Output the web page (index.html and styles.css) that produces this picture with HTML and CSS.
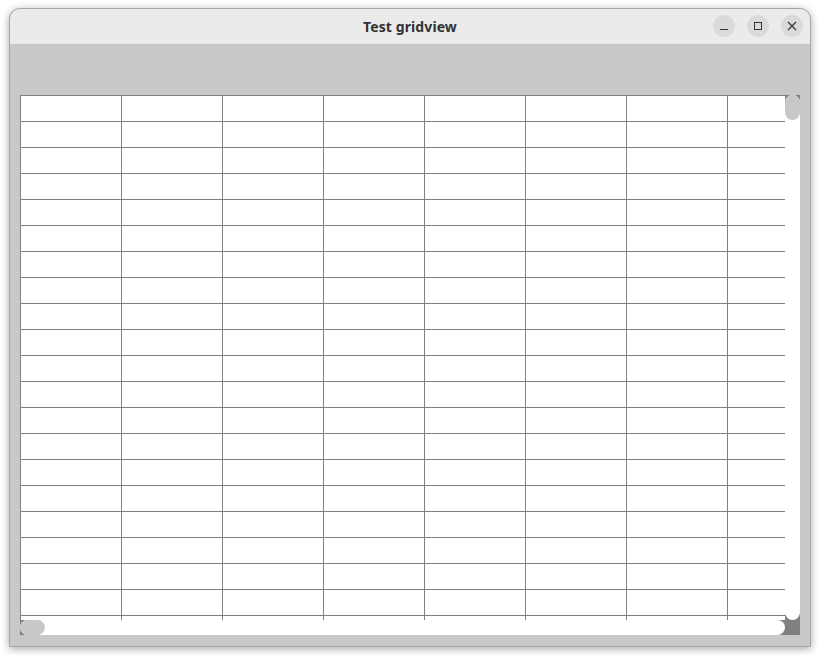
FILE: index.html
```html
<!DOCTYPE html>
<html lang="en">
<head>
<meta charset="utf-8">
<title>Test gridview</title>
<link rel="stylesheet" href="styles.css">
</head>
<body>
<div class="window">
  <header class="titlebar">
    <div class="title">Test gridview</div>
    <div class="controls">
      <button class="ctl" aria-label="Minimize">
        <svg width="10" height="10" viewBox="0 0 10 10"><path d="M1 8.5H9" stroke="#333" stroke-width="1" fill="none"/></svg>
      </button>
      <button class="ctl" aria-label="Maximize">
        <svg width="10" height="10" viewBox="0 0 10 10"><rect x="1.5" y="1.5" width="7" height="7" stroke="#333" stroke-width="1" fill="none"/></svg>
      </button>
      <button class="ctl" aria-label="Close">
        <svg width="10" height="10" viewBox="0 0 10 10"><path d="M1 1L9 9M9 1L1 9" stroke="#333" stroke-width="1.2" fill="none"/></svg>
      </button>
    </div>
  </header>
  <main class="content">
    <div class="gridview">
      <div class="viewport"><div class="cells"></div></div>
      <div class="vscroll"><div class="track"><div class="thumb"></div></div></div>
      <div class="hscroll"><div class="track"><div class="thumb"></div></div></div>
      <div class="corner"></div>
    </div>
  </main>
</div>
</body>
</html>
```

FILE: styles.css
```css
html, body {
  margin: 0;
  padding: 0;
  background: #ffffff;
  width: 820px;
  height: 655px;
  overflow: hidden;
}
body {
  padding: 8px 0 0 9px;
  box-sizing: border-box;
  font-family: "Noto Sans", "DejaVu Sans", sans-serif;
}
.window {
  width: 802px;
  height: 639px;
  box-sizing: border-box;
  border: 1px solid #a6a6a6;
  border-radius: 11px 11px 0 0;
  background: #c8c8c8;
  box-shadow: 0 2px 9px rgba(0,0,0,0.35);
  display: flex;
  flex-direction: column;
  overflow: hidden;
}
.titlebar {
  height: 36px;
  flex: none;
  box-sizing: border-box;
  background: #ebebeb;
  border-bottom: 1px solid #c2c2c2;
  display: flex;
  align-items: center;
  justify-content: center;
  position: relative;
}
.title {
  font-weight: 700;
  font-size: 14px;
  letter-spacing: 0.1px;
  color: #333333;
}
.controls {
  position: absolute;
  right: 7px;
  top: 6px;
  display: flex;
  gap: 12px;
}
.ctl {
  width: 22px;
  height: 22px;
  border-radius: 50%;
  border: 0;
  padding: 0;
  background: #dadada;
  display: flex;
  align-items: center;
  justify-content: center;
}
.content {
  flex: 1;
  padding: 50px 0 0 10px;
}
.gridview {
  display: grid;
  grid-template-columns: 765px 15px;
  grid-template-rows: 525px 15px;
}
.viewport {
  background: #ffffff;
  overflow: hidden;
}
.cells {
  width: 100%;
  height: 100%;
  background-image:
    linear-gradient(to right, #808080 0, #808080 1px, transparent 1px),
    linear-gradient(to bottom, #808080 0, #808080 1px, transparent 1px);
  background-size: 101px 100%, 100% 26px;
}
.vscroll, .hscroll, .corner {
  background: #808080;
}
.track {
  background: #ffffff;
  width: 100%;
  height: 100%;
  border-radius: 7.5px;
  display: flex;
}
.vscroll .track { flex-direction: column; }
.thumb {
  background: #c8c8c8;
  border-radius: 7.5px;
}
.vscroll .thumb { height: 25px; }
.hscroll .thumb { width: 25px; }
```
